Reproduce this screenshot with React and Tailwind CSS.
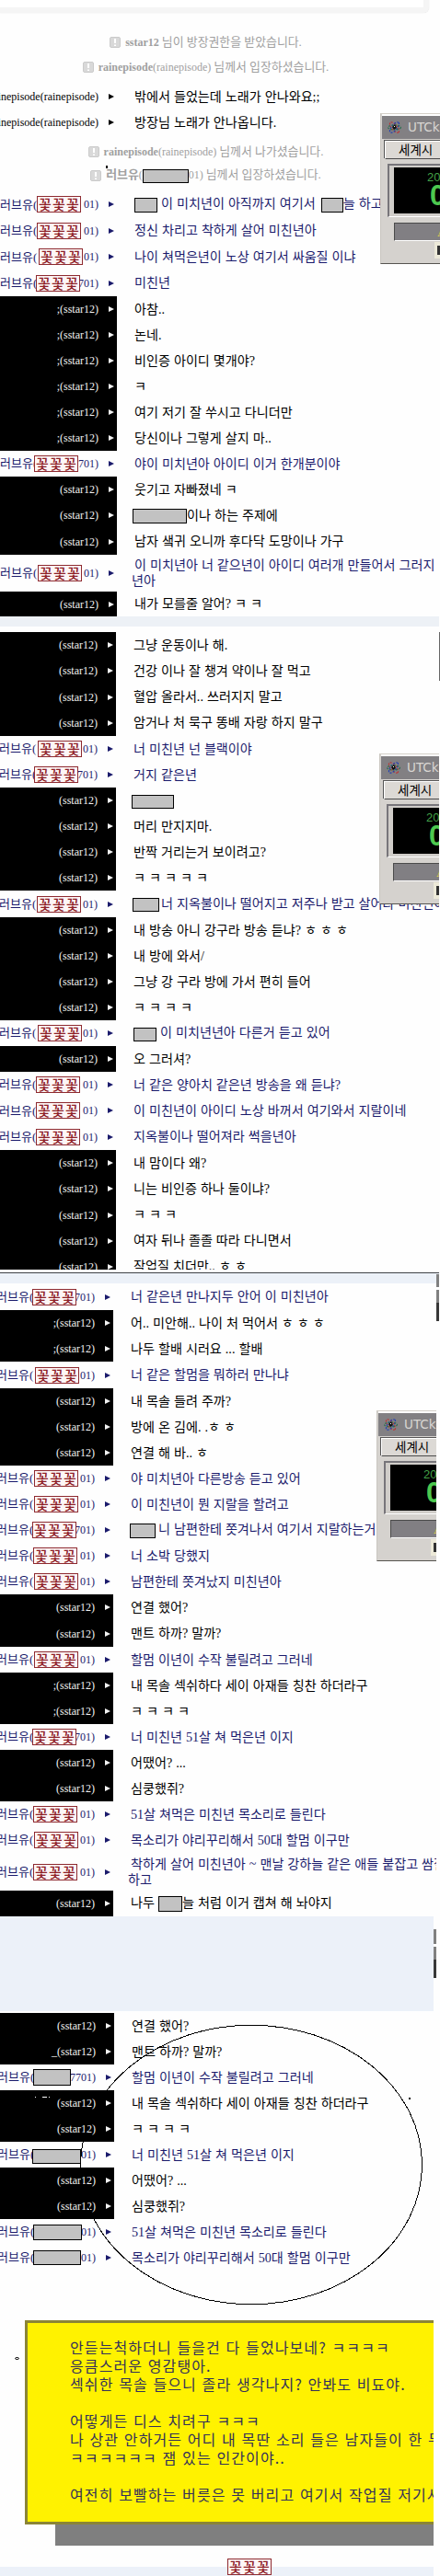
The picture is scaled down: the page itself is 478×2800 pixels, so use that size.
import React from 'react';
import clsx from 'clsx';

const serif = "font-['Liberation_Serif','Noto_Sans_CJK_KR',serif]";
const sans = "font-['Noto_Sans_CJK_KR',sans-serif]";

const Mask = ({ className }) => (
  <span className={clsx('inline-block border border-black bg-[#c2c2c2] align-middle', className)} />
);

const Stamp = ({ className }) => (
  <span className={clsx('flex h-[18px] w-[48px] items-center justify-center border border-[#8e2a30] bg-[#fdf6f6] text-[15px] leading-none font-medium tracking-[1.2px] text-[#8e2127]', sans, className)}>
    <span className="-mr-px -mt-px">꽃꽃꽃</span>
  </span>
);

const Arrow = () => (
  <svg className="ml-[11px] mr-[3px] shrink-0" width="6" height="6" viewBox="0 0 6 6" fill="currentColor">
    <path d="M0 0L6 3L0 6Z" />
  </svg>
);

// who: 's' = room owner, 'l' = loveyou, 'r' = rainepisode
const partOne = [
  {
    who: 'l',
    height: 'h-[114px]',
    rows: [
      { cover: 'left-[40px]', text: <><Mask className="h-[16px] w-[25px]" /><span className="ml-[4px]">이 미치년이 아직까지 여기서</span><Mask className="ml-[6px] h-[16px] w-[24px]" />늘 하고</> },
      { cover: 'left-[40px]', text: '정신 차리고 착하게 살어 미친년아' },
      { cover: 'left-[42px]', text: '나이 쳐먹은년이 노상 여기서 싸움질 이냐' },
      { cover: 'left-[39px]', id: '701)', text: '미친년' },
    ],
  },
  {
    who: 's',
    height: 'h-[168px]',
    rows: [
      { pre: ';', text: '아참..' },
      { pre: ';', text: '논네.' },
      { pre: ';', text: '비인증 아이디 몇개야?' },
      { pre: ';', text: 'ㅋ' },
      { pre: ';', text: '여기 저기 잘 쑤시고 다니더만' },
      { pre: ';', text: '당신이나 그렇게 살지 마..' },
    ],
  },
  { who: 'l', height: 'h-[28px]', rows: [{ cover: 'left-[37px]', id: '701)', text: '야이 미치년아 아이디 이거 한개분이야' }] },
  {
    who: 's',
    height: 'h-[85px]',
    rows: [
      { text: '웃기고 자빠졌네 ㅋ' },
      { text: <><Mask className="-ml-[2px] h-[16px] w-[59px]" />이나 하는 주제에</> },
      { text: '남자 샠귀 오니까 후다닥 도망이나 가구' },
    ],
  },
  {
    who: 'l',
    height: 'h-[40px]',
    rows: [{ cover: 'left-[41px]', text: <>이 미치년아 너 같으년이 아이디 여러개 만들어서 그러지<br />년아</> }],
  },
  { who: 's', height: 'h-[27px]', rows: [{ text: '내가 모를줄 알어? ㅋ ㅋ' }] },
];

const partTwo = [
  {
    who: 's',
    height: 'h-[113px]',
    rows: [
      { text: '그냥 운동이나 해.' },
      { text: '건강 이나 잘 챙겨 약이나 잘 먹고' },
      { text: '혈압 올라서.. 쓰러지지 말고' },
      { text: '암거나 처 묵구 똥배 자랑 하지 말구' },
    ],
  },
  {
    who: 'l',
    height: 'h-[56px]',
    rows: [
      { cover: 'left-[41px]', text: '너 미친년 넌 블랙이야' },
      { cover: 'left-[37px]', id: '701)', text: '거지 같은년' },
    ],
  },
  {
    who: 's',
    height: 'h-[112px]',
    rows: [
      { text: <Mask className="-ml-[2px] h-[15px] w-[46px]" /> },
      { text: '머리 만지지마.' },
      { text: '반짝 거리는거 보이려고?' },
      { text: 'ㅋ ㅋ ㅋ ㅋ ㅋ' },
    ],
  },
  {
    who: 'l',
    height: 'h-[29px]',
    rows: [{ cover: 'left-[40px]', text: <><Mask className="-ml-px mr-[2px] h-[15px] w-[29px]" />너 지옥불이나 떨어지고 저주나 받고 살어라 미친년아</> }],
  },
  {
    who: 's',
    height: 'h-[112px]',
    rows: [
      { text: '내 방송 아니 강구라 방송 듣냐? ㅎ ㅎ ㅎ' },
      { text: '내 방에 와서/' },
      { text: '그냥 강 구라 방에 가서 편히 들어' },
      { text: 'ㅋ ㅋ ㅋ ㅋ' },
    ],
  },
  {
    who: 'l',
    height: 'h-[28px]',
    rows: [{ cover: 'left-[41px]', text: <><Mask className="mr-[4px] h-[15px] w-[25px]" />이 미치년년아 다른거 듣고 있어</> }],
  },
  { who: 's', height: 'h-[28px]', rows: [{ text: '오 그러셔?' }] },
  {
    who: 'l',
    height: 'h-[85px]',
    rows: [
      { cover: 'left-[39px]', text: '너 같은 양아치 같은년 방송을 왜 듣냐?' },
      { cover: 'left-[39px]', text: '이 미친년이 아이디 노상 바꺼서 여기와서 지랄이네' },
      { cover: 'left-[39px]', text: '지옥불이나 떨어져라 썩을년아' },
    ],
  },
  {
    who: 's',
    height: 'h-[141px]',
    rows: [
      { text: '내 맘이다 왜?' },
      { text: '니는 비인증 하나 둘이냐?' },
      { text: 'ㅋ ㅋ ㅋ' },
      { text: '여자 뒤나 졸졸 따라 다니면서' },
      { text: '작업질 치더만.. ㅎ ㅎ' },
    ],
  },
];

const partThree = [
  { who: 'l', height: 'h-[29px]', rows: [{ cover: 'left-[35px]', id: '701)', text: '너 같은년 만나지두 안어 이 미친년아' }] },
  {
    who: 's',
    height: 'h-[56px]',
    rows: [
      { pre: ';', text: '어.. 미안해.. 나이 처 먹어서 ㅎ ㅎ ㅎ' },
      { pre: ';', text: '나두 할배 시러요 ... 할배' },
    ],
  },
  { who: 'l', height: 'h-[29px]', rows: [{ cover: 'left-[38px]', text: '너 같은 할멈을 뭐하러 만나냐' }] },
  {
    who: 's',
    height: 'h-[84px]',
    rows: [
      { text: '내 목솔 들려 주까?' },
      { text: '방에 온 김에. .ㅎ ㅎ' },
      { text: '연결 해 바.. ㅎ' },
    ],
  },
  {
    who: 'l',
    height: 'h-[140px]',
    rows: [
      { cover: 'left-[37px]', text: '야 미치년아 다른방송 듣고 있어' },
      { cover: 'left-[37px]', text: '이 미친년이 뭔 지랄을 할려고' },
      { cover: 'left-[35px]', id: '701)', text: <><Mask className="-ml-px mr-[3px] h-[16px] w-[28px]" />니 남편한테 쫏겨나서 여기서 지랄하는거</> },
      { cover: 'left-[36px]', text: '너 소박 당했지' },
      { cover: 'left-[37px]', text: '남편한테 쫏겨났지 미친년아' },
    ],
  },
  {
    who: 's',
    height: 'h-[57px]',
    rows: [{ text: '연결 했어?' }, { text: '맨트 하까? 말까?' }],
  },
  { who: 'l', height: 'h-[28px]', rows: [{ cover: 'left-[37px]', text: '할멈 이년이 수작 불릴려고 그러네' }] },
  {
    who: 's',
    height: 'h-[56px]',
    rows: [
      { pre: ';', text: '내 목솔 섹쉬하다 세이 아재들 칭찬 하더라구' },
      { pre: ';', text: 'ㅋ ㅋ ㅋ ㅋ' },
    ],
  },
  { who: 'l', height: 'h-[28px]', rows: [{ cover: 'left-[35px]', id: '701)', text: '너 미친년 51살 쳐 먹은년 이지' }] },
  {
    who: 's',
    height: 'h-[56px]',
    rows: [{ text: '어땠어? ...' }, { text: '심쿵했쥐?' }],
  },
  {
    who: 'l',
    height: 'h-[56px]',
    rows: [
      { cover: 'left-[36px]', text: '51살 쳐먹은 미친년 목소리로 들린다' },
      { cover: 'left-[37px]', text: '목소리가 야리꾸리해서 50대 할멈 이구만' },
    ],
  },
  {
    who: 'l',
    height: 'h-[41px]',
    rows: [{ cover: 'left-[36px]', text: <>착하게 살어 미친년아 ~ 맨날 강하늘 같은 애들 붙잡고 쌈질<br />하고</> }],
  },
  {
    who: 's',
    height: 'h-[28px]',
    rows: [{ text: <>나두 <Mask className="h-[17px] w-[26px]" />늘 처럼 이거 캡쳐 해 놔야지</> }],
  },
];

const partFour = [
  {
    who: 's',
    height: 'h-[56px]',
    rows: [{ text: '연결 했어?' }, { pre: '_', text: '맨트 하까? 말까?' }],
  },
  { who: 'l', height: 'h-[28px]', rows: [{ block: 'left-[36px] w-[41px] h-[18px]', id: '7701)', text: '할멈 이년이 수작 불릴려고 그러네' }] },
  {
    who: 's',
    height: 'h-[56px]',
    rows: [{ text: '내 목솔 섹쉬하다 세이 아재들 칭찬 하더라구' }, { text: 'ㅋ ㅋ ㅋ ㅋ' }],
  },
  { who: 'l', height: 'h-[28px]', rows: [{ block: 'left-[35px] w-[53px] h-[16px] mt-[4px]', text: '너 미친년 51살 쳐 먹은년 이지' }] },
  {
    who: 's',
    height: 'h-[56px]',
    rows: [{ text: '어땠어? ...' }, { text: '심쿵했쥐?' }],
  },
  {
    who: 'l',
    height: 'h-[56px]',
    rows: [
      { block: 'left-[36px] w-[53px] h-[17px]', text: '51살 쳐먹은 미친년 목소리로 들린다' },
      { block: 'left-[36px] w-[52px] h-[16px]', text: '목소리가 야리꾸리해서 50대 할멈 이구만' },
    ],
  },
];

const Row = ({ who, row, nameWidth, shift }) => (
  <div className={clsx('flex min-h-0 flex-1', who === 'l' ? 'text-[#1b1b6c]' : 'text-black')}>
    <div className={clsx('relative flex shrink-0 items-center overflow-hidden text-[12px]', nameWidth, who === 's' && 'bg-black text-[#f2f2f2]')}>
      {who === 'l' && (
        <>
          <span className={clsx('whitespace-nowrap text-[13px]', shift)}>러브유(</span>
          <span className="ml-auto">{row.id || '01)'}</span>
        </>
      )}
      {who === 's' && <span className="ml-auto">{row.pre}(sstar12)</span>}
      {who === 'r' && <span className="-ml-[16px] flex-1 text-right">rainepisode(rainepisode)</span>}
      {row.cover && <Stamp className={clsx('absolute', row.cover)} />}
      {row.block && <Mask className={clsx('absolute', row.block)} />}
      <Arrow />
    </div>
    <div className="flex items-center pl-[16px]">
      <p className="indent-[3px] text-[14.1px] leading-[17px] whitespace-nowrap [word-spacing:0.5px]">{row.text}</p>
    </div>
  </div>
);

const Group = ({ group, nameWidth, shift }) => (
  <div className={clsx('flex shrink-0 flex-col', group.height)}>
    {group.rows.map((row, i) => (
      <Row key={i} who={group.who} row={row} nameWidth={nameWidth} shift={shift} />
    ))}
  </div>
);

const Notice = ({ className, children }) => (
  <div className={clsx('flex w-[447px] shrink-0 items-center justify-center gap-[5px] text-[12px] text-[#a0a0a0]', className)}>
    <svg width="12" height="12" viewBox="0 0 12 12">
      <rect x="0.5" y="0.5" width="11" height="11" rx="1.5" fill="#d9d9d9" stroke="#cbcbcb" />
      <rect x="5" y="2" width="2" height="5" fill="#fff" />
      <rect x="5" y="8.5" width="2" height="1.5" fill="#fff" />
    </svg>
    <p className="leading-[14px] whitespace-nowrap">{children}</p>
  </div>
);

const ClockWindow = ({ className }) => (
  <div className={clsx('absolute h-[164px] overflow-hidden border-t border-b border-l border-t-[#d4d0c8] border-b-[#55534f] border-l-[#c9c6c0] bg-[#d5d2ce] pl-[2px]', className)}>
    <div className="-ml-px flex h-[27px] w-[90px] items-center border-t-2 border-white bg-[#828083] pl-[6px]">
      <svg width="15" height="15" viewBox="0 0 15 15">
        <g fill="none" strokeDasharray="2 1.4" strokeWidth="1.2">
          <ellipse cx="7.5" cy="7.5" rx="7" ry="3" transform="rotate(50 7.5 7.5)" stroke="#bb3333" />
          <ellipse cx="7.5" cy="7.5" rx="7" ry="3" transform="rotate(-50 7.5 7.5)" stroke="#2540b0" />
          <ellipse cx="7.5" cy="7.5" rx="7" ry="2.5" stroke="#2b6e4f" />
        </g>
        <path d="M5 7L8 4L10 8L7 10Z" fill="#111" />
        <rect x="7" y="6" width="1" height="1" fill="#fff" />
      </svg>
      <span className="ml-[7px] font-['DejaVu_Sans',sans-serif] text-[13.5px] text-[#d9d6d2]">UTCk</span>
    </div>
    <div className="mt-[2px] ml-[2px] flex h-[20px] w-[90px] items-center border border-[#4b4b4b] border-t-white border-l-white bg-[#dcd9d5] shadow-[-1px_-1px_0_#555]">
      <span className={clsx('ml-[14px] text-[13.5px] leading-none whitespace-nowrap text-black', sans)}>세계시</span>
    </div>
    <div className="mt-[5px] ml-[5px] h-[58px] w-[90px] border-b border-l-2 border-t-2 border-[#77757a] border-b-white bg-[#d0cdc9] pt-[2px] pl-[5px]">
      <div className="h-[50px] bg-black pl-[36px] font-['Liberation_Sans',sans-serif]">
        <p className="pt-[4px] text-[13px] leading-[13px] text-[#43a047]">20</p>
        <p className="ml-[3px] text-[31px] leading-[27px] font-bold text-[#4dc84f]">0</p>
      </div>
    </div>
    <div className="mt-[6px] ml-[12px] h-[20px] w-[90px] border border-[#4a4a4a] border-b-white bg-[#817f83] pl-[46px] text-[13px] leading-[20px] text-[#e5dc4a]">A</div>
    <div className="mt-px ml-[56px] flex h-[18px] w-[40px] items-center bg-[#ece9d8] pl-[3px]">
      <span className="h-[10px] w-[12px] bg-[#333]" />
    </div>
  </div>
);

const memo = [
  '안듣는척하더니 들을건 다 들었나보네? ㅋㅋㅋㅋ',
  '응큼스러운 영감탱아.',
  '섹쉬한 목솔 들으니 졸라 생각나지? 안봐도 비됴야.',
  '',
  '어떻게든 디스 치려구 ㅋㅋㅋ',
  '나 상관 안하거든 어디 내 목딴 소리 들은 남자들이 한 두',
  'ㅋㅋㅋㅋㅋㅋ 잼 있는 인간이야..',
  '',
  '여전히 보빨하는 버릇은 못 버리고 여기서 작업질 저기서',
];

const App = () => {
  return (
    <div className={clsx('relative h-[2800px] w-[478px] overflow-hidden bg-[#fefefe]', serif)}>
      {/* first capture */}
      <section className="relative flex h-[670px] w-[478px] flex-col overflow-hidden">
        <div className="h-[14px] w-[466px] shrink-0 rounded-br-[6px] border-r-[6px] border-b-[6px] border-[#f5f5f5] bg-white shadow-[0_0_1px_#ccc]" />
        <Notice className="mt-[18px] h-[28px]">
          <b>sstar12</b> <span className="text-[12.9px]">님이 방장권한을 받았습니다.</span>
        </Notice>
        <Notice className="h-[26px]">
          <b>rainepisode</b>(rainepisode) <span className="text-[12.9px]">님께서 입장하셨습니다.</span>
        </Notice>
        <div className="mt-[5px] flex h-[56px] shrink-0 flex-col">
          <Row who="r" nameWidth="w-[127px]" row={{ text: '밖에서 들었는데 노래가 안나와요;;' }} />
          <Row who="r" nameWidth="w-[127px]" row={{ text: '방장님 노래가 안나옵니다.' }} />
        </div>
        <Notice className="mt-[4px] h-[27px]">
          <b>rainepisode</b>(rainepisode) <span className="text-[12.9px]">님께서 나가셨습니다.</span>
        </Notice>
        <Notice className="mb-[4px] h-[26px]">
          <b className="text-[12.9px]">러브유</b>(<Mask className="h-[15px] w-[50px]" />01) <span className="text-[12.9px]">님께서 입장하셨습니다.</span>
        </Notice>
        {partOne.map((group, i) => (
          <Group key={i} group={group} nameWidth="w-[127px]" />
        ))}
        <span className="absolute top-[180px] left-[115px] h-[3px] w-[2px] bg-black" />
        <ClockWindow className="top-[123px] left-[413px] w-[65px]" />
      </section>
      <div className="h-[11px] w-[477px] bg-[#edf1f6]" />

      {/* second capture */}
      <section className="relative flex h-[699px] w-[477px] flex-col overflow-hidden pt-[6px]">
        {partTwo.map((group, i) => (
          <Group key={i} group={group} nameWidth="w-[126px]" shift="-ml-px" />
        ))}
        <ClockWindow className="top-[138px] left-[412px] w-[65px]" />
      </section>
      <div className="mt-[3px] h-[12px] w-[477px] border-t border-[#3f4247] bg-[#ecf1f8]" />

      {/* third capture */}
      <section className="relative flex h-[688px] w-[474px] flex-col overflow-hidden">
        {partThree.map((group, i) => (
          <Group key={i} group={group} nameWidth="w-[123px]" shift="-ml-[4px]" />
        ))}
        <ClockWindow className="top-[138px] left-[409px] w-[65px]" />
      </section>
      <div className="h-[103px] w-[471px] bg-[#ecf1f9]" />

      {/* fourth capture */}
      <section className="relative mt-[2px] flex h-[280px] w-[471px] flex-col overflow-hidden">
        {partFour.map((group, i) => (
          <Group key={i} group={group} nameWidth="w-[124px]" shift="-ml-[3px]" />
        ))}
      </section>

      {/* memo card */}
      <div className="mt-[54px] ml-[27px] h-[222px] w-[444px] overflow-hidden border-y-[3px] border-l-[3px] border-[#8b8536] bg-[#fff200] pt-[16px] pl-[46px]">
        {memo.map((line, i) => (
          <p key={i} className={clsx('h-[20px] text-[16px] leading-[20px] tracking-[1.1px] whitespace-nowrap text-[#33305a] [word-spacing:1px]', sans)}>
            {line}
          </p>
        ))}
      </div>
      <div className="ml-[60px] h-[23px] w-[411px] bg-[#7f7f7f]" />
      <div className="mt-[23px] h-[10px] w-[471px] bg-[#ecf1f9]" />
      <Stamp className="absolute top-[2781px] left-[247px]" />

      {/* window edges peeking out between captures */}
      <div className="absolute top-[687px] left-[477px] h-[53px] w-px bg-[#666]" />
      <div className="absolute top-[1385px] left-[474px] h-[51px] w-[3px] border-b-[20px] border-[#383838] bg-[#808080]" />
      <div className="absolute top-[1399px] left-[474px] h-[3px] w-[3px] bg-white" />
      <div className="absolute top-[2097px] left-[471px] h-[53px] w-[3px] border-b-[20px] border-[#383838] bg-[#808080]" />
      <div className="absolute top-[2113px] left-[471px] h-[3px] w-[3px] bg-white" />

      {/* hand drawn circle and stray marks */}
      <svg className="absolute top-[2190px] left-0" width="478" height="400" viewBox="0 0 478 400" fill="none" stroke="#000">
        <ellipse cx="273" cy="163" rx="185.5" ry="151.7" shapeRendering="crispEdges" />
        <rect x="444" y="90" width="2" height="2" fill="#000" stroke="none" />
        <ellipse cx="18.5" cy="373.5" rx="2" ry="1" />
        <path d="M38 89.5h1M46 89.5h5M53 89.5h1" stroke="#fff" />
      </svg>
    </div>
  );
};

export default App;
